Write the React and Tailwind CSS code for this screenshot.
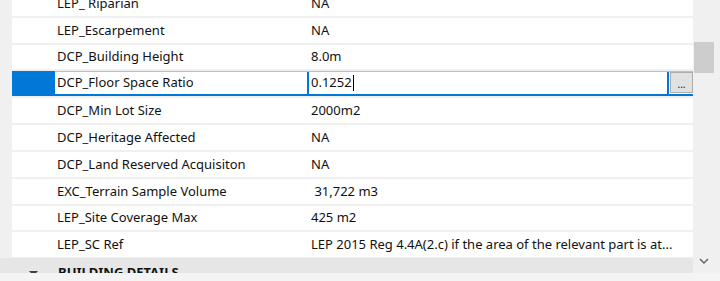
import React from "react";

const FONT = { fontFamily: '"Segoe UI", "Noto Sans", "Liberation Sans", sans-serif' };

const rows = [
  { name: "LEP_ Riparian", value: "NA", h: "h-[16px]", top: true },
  { name: "LEP_Escarpement", value: "NA", h: "h-[25px]" },
  { name: "DCP_Building Height", value: "8.0m", h: "h-[24px]" },
  { name: "DCP_Floor Space Ratio", value: "0.1252", h: "h-[25px]", selected: true },
  { name: "DCP_Min Lot Size", value: "2000m2", h: "h-[25px]" },
  { name: "DCP_Heritage Affected", value: "NA", h: "h-[25px]" },
  { name: "DCP_Land Reserved Acquisiton", value: "NA", h: "h-[25px]" },
  { name: "EXC_Terrain Sample Volume", value: " 31,722 m3", h: "h-[25px]" },
  { name: "LEP_Site Coverage Max", value: "425 m2", h: "h-[24px]" },
  { name: "LEP_SC Ref", value: "LEP 2015 Reg 4.4A(2.c) if the area of the relevant part is at...", h: "h-[25px]" },
];

const Row = ({ name, value, h, top }) => (
  <div className={`flex ${top ? "items-start" : "items-center"} ${h} bg-white text-[13px] text-[#111] overflow-hidden`}>
    <div className={`w-[295px] shrink-0 pl-[45px] whitespace-nowrap ${top ? "-mt-[6px]" : ""}`}>{name}</div>
    <div className={`pl-[4px] whitespace-pre ${top ? "-mt-[6px]" : ""}`}>{value}</div>
  </div>
);

const SelectedRow = ({ name, value }) => (
  <div className="flex h-[25px] text-[13px] text-[#111]">
    <div className="w-[43px] shrink-0 bg-[#0078d7]" />
    <div className="flex flex-1 min-w-0 border-t border-b-2 border-t-[#99c9ef] border-b-[#0078d7] bg-white">
      <div className="w-[252px] shrink-0 flex items-center pl-[2px] whitespace-nowrap">{name}</div>
      <div className="flex items-center w-[362px] shrink-0 border-x-2 border-[#0078d7] pl-[2px]">
        <span>{value}</span>
        <span className="ml-[1px] w-px h-[16px] bg-black" />
      </div>
      <div className="flex flex-1 items-stretch pl-[1px] pb-px">
        <div className="flex-1 flex items-end justify-center pb-[3px] bg-[#e1e1e1] border border-[#adadad] text-[10px] leading-none">...</div>
      </div>
    </div>
  </div>
);

export default function App() {
  return (
    <div className="w-[720px] h-[281px] bg-[#f4f4f4] overflow-hidden" style={FONT}>
      <div className="flex h-[273px]">
        <div className="flex-1 min-w-0 overflow-hidden flex flex-col bg-[#f0f0f0]">
          <div className="flex flex-col gap-[2px] pl-[12px] pb-px">
            {rows.map((r) =>
              r.selected ? <SelectedRow key={r.name} {...r} /> : <Row key={r.name} {...r} />
            )}
          </div>
          <div className="flex-1 flex items-start bg-[#e6e6e6] overflow-hidden">
            <svg width="10" height="6" viewBox="0 0 10 6" className="ml-[29px] mt-[13px] shrink-0">
              <path d="M0 0 H9 L4.5 5 Z" fill="#404040" />
            </svg>
            <div className="ml-[19px] mt-[5px] text-[13px] font-bold text-[#111] whitespace-nowrap">BUILDING DETAILS</div>
          </div>
        </div>
        <div className="w-[27px] shrink-0 flex flex-col bg-[#f0f0f0]">
          <div className="mt-[42px] ml-px w-[20px] h-[31px] bg-[#cdcdcd]" />
          <div className="flex-1" />
          <svg width="10" height="6" viewBox="0 0 10 6" className="ml-[6px] mb-[9px]">
            <path d="M1 1 L5 5 L9 1" stroke="#606060" strokeWidth="1.4" fill="none" />
          </svg>
        </div>
      </div>
    </div>
  );
}
